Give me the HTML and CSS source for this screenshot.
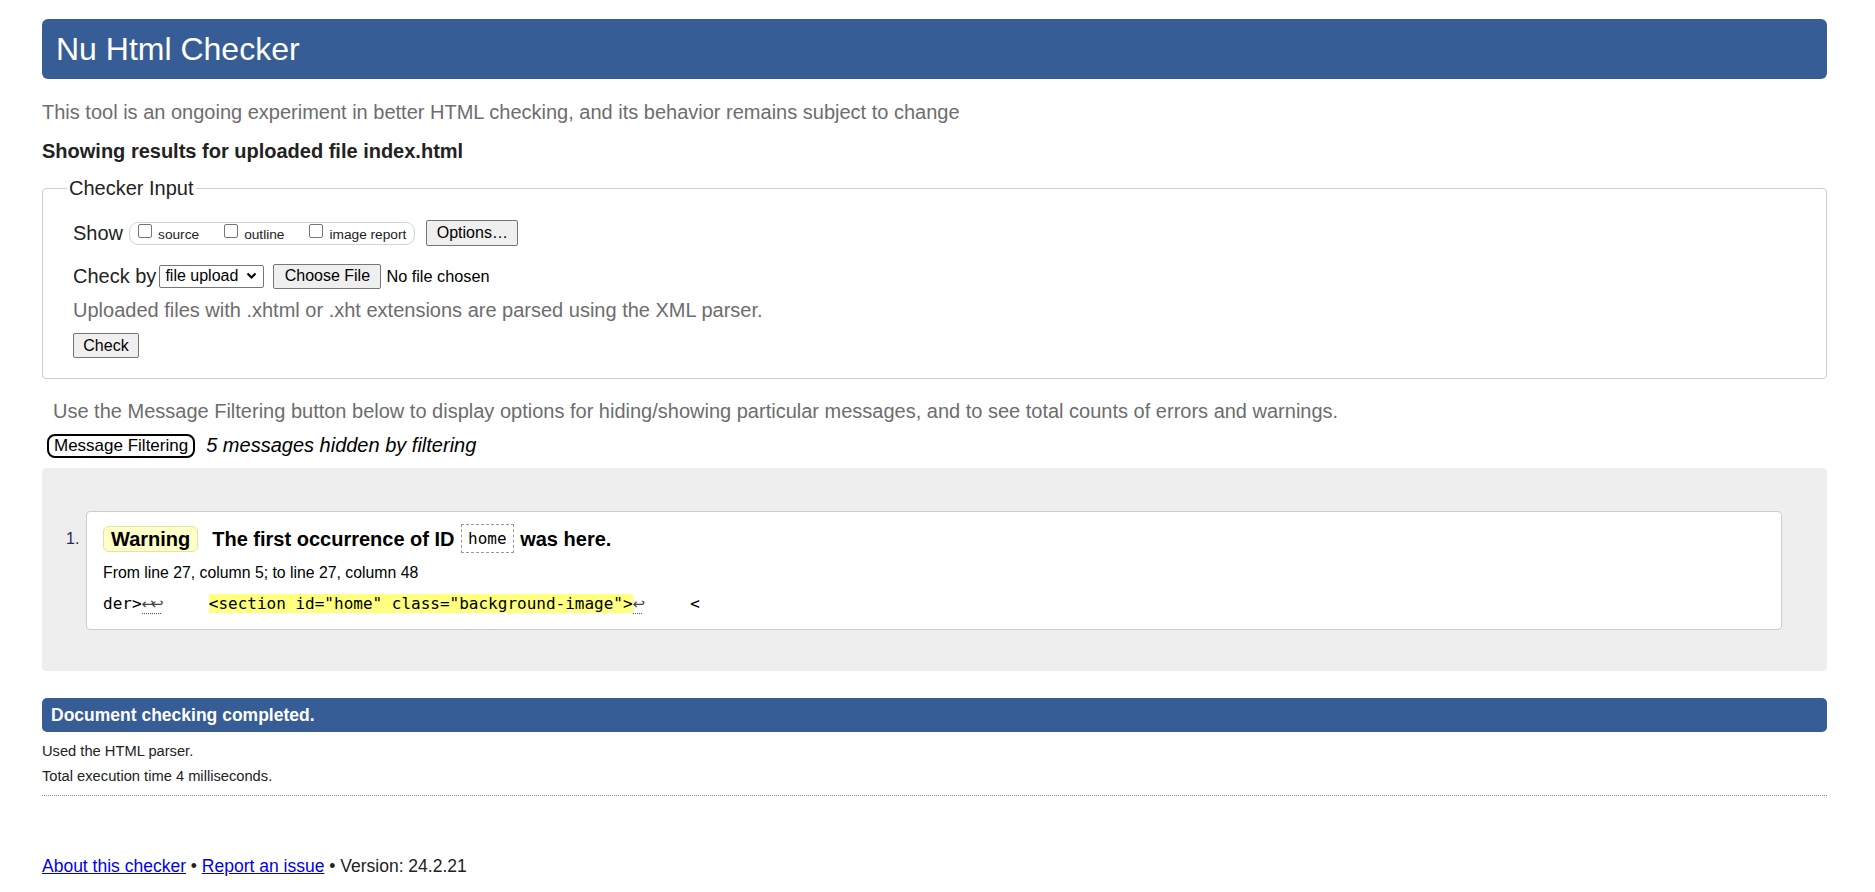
FILE: index.html
```html
<!DOCTYPE html>
<html lang="en">
<head>
<meta charset="utf-8">
<title>Showing results for index.html - Nu Html Checker</title>
<link rel="stylesheet" href="styles.css">
</head>
<body>
<div class="page">
  <h1 class="banner">Nu Html Checker</h1>
  <p class="tagline">This tool is an ongoing experiment in better HTML checking, and its behavior remains subject to change</p>
  <p class="showing">Showing results for uploaded file index.html</p>

  <fieldset class="checker">
    <legend class="legend">Checker Input</legend>
    <div class="row row-show">
      <span class="row-label">Show</span>
      <span class="pill">
        <span class="opt"><span class="cbox"></span><span class="opt-text">source</span></span>
        <span class="opt"><span class="cbox"></span><span class="opt-text">outline</span></span>
        <span class="opt"><span class="cbox"></span><span class="opt-text">image report</span></span>
      </span>
      <span class="btn btn-options">Options…</span>
    </div>
    <div class="row row-checkby">
      <span class="row-label">Check by</span>
      <span class="select">file upload<svg class="chev" width="11" height="8" viewBox="0 0 11 8"><path d="M1.5 1.5 L5.5 5.5 L9.5 1.5" fill="none" stroke="#000" stroke-width="2"/></svg></span>
      <span class="btn btn-choose">Choose File</span>
      <span class="nofile">No file chosen</span>
    </div>
    <p class="hint">Uploaded files with .xhtml or .xht extensions are parsed using the XML parser.</p>
    <span class="btn btn-check">Check</span>
  </fieldset>

  <p class="filter-note">Use the Message Filtering button below to display options for hiding/showing particular messages, and to see total counts of errors and warnings.</p>
  <div class="filter-row">
    <span class="btn-filter">Message Filtering</span>
    <span class="hidden-count">5 messages hidden by filtering</span>
  </div>

  <div class="results">
    <span class="num">1.</span>
    <div class="msg">
      <div class="msg-head">
        <span class="badge">Warning</span>
        <span class="msg-title">The first occurrence of ID <code class="idcode">home</code> was here.</span>
      </div>
      <p class="location">From line 27, column 5; to line 27, column 48</p>
      <p class="extract">der&gt;<b class="lf"><span class="lfc">↩</span><span class="lfc">↩</span></b>     <span class="hl">&lt;section id="home" class="background-image"&gt;</span><b class="lf"><span class="lfc">↩</span></b>     &lt;</p>
    </div>
  </div>

  <div class="done">Document checking completed.</div>
  <p class="small first">Used the HTML parser.</p>
  <p class="small">Total execution time 4 milliseconds.</p>
  <hr class="rule">

  <p class="footer"><a href="#">About this checker</a> • <a href="#">Report an issue</a> • Version: 24.2.21</p>
</div>
</body>
</html>
```
FILE: styles.css
```css
html, body {
  margin: 0;
  padding: 0;
  background: #fff;
}
body {
  font-family: "Liberation Sans", Arial, sans-serif;
  color: #222;
}
.page {
  padding: 19px 48px 0 42px;
}
p { margin: 0; }

.banner {
  margin: 0;
  height: 60px;
  background: #365d95;
  border-radius: 6px;
  color: #fff;
  font-weight: normal;
  font-size: 32px;
  line-height: 60px;
  padding-left: 14px;
}
.tagline {
  margin-top: 21px;
  font-size: 20px;
  line-height: 24px;
  color: #6d6d6d;
}
.showing {
  margin-top: 15px;
  font-size: 20px;
  line-height: 24px;
  font-weight: bold;
}

.checker {
  margin: 13px 0 0 0;
  border: 1px solid #cdcdcd;
  border-radius: 4px;
  padding: 20px 20px 20px 30px;
  min-inline-size: 0;
}
.legend {
  font-size: 20px;
  line-height: 24px;
  padding: 0 2px;
  margin-left: -6px;
  color: #222;
}
.row {
  display: flex;
  align-items: center;
  height: 26px;
  font-size: 16px;
}
.row-label {
  font-size: 20px;
  line-height: 24px;
}
.pill {
  display: flex;
  align-items: flex-start;
  height: 21px;
  margin-left: 6px;
  padding: 0 8px 0 8px;
  border: 1px solid #d4d4d4;
  border-radius: 9px;
}
.opt {
  display: flex;
  align-items: flex-start;
  margin-right: 25px;
}
.opt:last-child { margin-right: 0; }
.cbox {
  width: 12px;
  height: 12px;
  margin-top: 1px;
  border: 1px solid #767676;
  border-radius: 2px;
  background: #fff;
}
.opt-text {
  font-size: 13.7px;
  line-height: 18px;
  margin-left: 6px;
  margin-top: 3px;
}
.btn {
  display: inline-flex;
  align-items: center;
  justify-content: center;
  box-sizing: border-box;
  background: #efefef;
  border: 1px solid #767676;
  border-radius: 2px;
  font-size: 16px;
  color: #000;
}
.btn-options {
  width: 92px;
  height: 26px;
  margin-left: 11px;
}
.row-checkby {
  margin-top: 17px;
}
.select {
  display: inline-flex;
  align-items: center;
  box-sizing: border-box;
  width: 105px;
  height: 23px;
  margin-left: 3px;
  padding: 0 6px 0 5px;
  border: 1px solid #767676;
  border-radius: 2px;
  background: #fff;
  font-size: 16px;
  color: #000;
  justify-content: space-between;
}
.chev { display: block; }
.btn-choose {
  width: 108px;
  height: 25px;
  margin-left: 9px;
}
.nofile {
  margin-left: 5px;
  font-size: 16.3px;
  color: #000;
}
.hint {
  margin-top: 9px;
  font-size: 20px;
  line-height: 24px;
  color: #6d6d6d;
}
.btn-check {
  margin-top: 11px;
  width: 66px;
  height: 25px;
}

.filter-note {
  margin-top: 20px;
  padding-left: 11px;
  font-size: 20px;
  line-height: 24px;
  color: #6d6d6d;
}
.filter-row {
  display: flex;
  align-items: center;
  margin-top: 10px;
  height: 25px;
  padding-left: 5px;
}
.btn-filter {
  box-sizing: border-box;
  height: 24px;
  padding: 0 5px;
  border: 2px solid #000;
  border-radius: 8px;
  font-size: 17px;
  line-height: 20px;
  color: #000;
}
.hidden-count {
  margin-left: 11px;
  font-size: 20px;
  font-style: italic;
  color: #000;
}

.results {
  display: flex;
  margin-top: 10px;
  padding: 43px 45px 41px 24px;
  background: #eeeeee;
  border-radius: 4px;
}
.num {
  width: 20px;
  padding-top: 18px;
  font-size: 16px;
  line-height: 20px;
  color: #28285a;
}
.msg {
  flex: 1;
  box-sizing: border-box;
  background: #fff;
  border: 1px solid #cccccc;
  border-radius: 4px;
  padding: 12px 16px 15px 16px;
}
.msg-head {
  display: flex;
  align-items: center;
  height: 30px;
}
.badge {
  box-sizing: border-box;
  height: 26px;
  padding: 0 7px;
  background: #ffffc8;
  border: 1px solid #e2e2a6;
  border-radius: 6px;
  font-size: 20px;
  line-height: 24px;
  font-weight: bold;
  color: #000;
}
.msg-title {
  margin-left: 14px;
  font-size: 20px;
  font-weight: bold;
  color: #000;
  line-height: 30px;
}
.idcode {
  display: inline-block;
  box-sizing: border-box;
  height: 29px;
  padding: 0 6px;
  margin: 0 1px;
  border: 1px dashed #999;
  font-family: "DejaVu Sans Mono", monospace;
  font-weight: normal;
  font-size: 16px;
  line-height: 27px;
  vertical-align: top;
}
.location {
  margin-top: 9px;
  font-size: 15.8px;
  line-height: 20px;
  color: #000;
}
.extract {
  margin-top: 11px;
  font-family: "DejaVu Sans Mono", monospace;
  font-size: 16px;
  line-height: 20px;
  white-space: pre;
  color: #000;
}
.lf {
  font-weight: normal;
  color: #444;
  border-bottom: 1px dotted #555;
}
.lfc {
  display: inline-block;
  width: 1ch;
  overflow: visible;
  text-align: center;
  font-family: "DejaVu Sans", sans-serif;
  font-size: 15px;
  line-height: 18px;
}
.hl {
  background: #ffff80;
}

.done {
  margin-top: 27px;
  height: 34px;
  line-height: 34px;
  padding-left: 9px;
  background: #365d95;
  border-radius: 5px;
  color: #fff;
  font-weight: bold;
  font-size: 17.5px;
}
.small {
  margin-top: 7px;
  font-size: 14.7px;
  line-height: 18px;
  color: #222;
}
.small.first { margin-top: 10px; }
.rule {
  margin: 10px 0 0 0;
  height: 0;
  border: 0;
  border-top: 1px dotted #8a8a8a;
}
.footer {
  margin-top: 60px;
  font-size: 17.5px;
  line-height: 20px;
  color: #222;
}
.footer a {
  color: #0000ee;
}
```
